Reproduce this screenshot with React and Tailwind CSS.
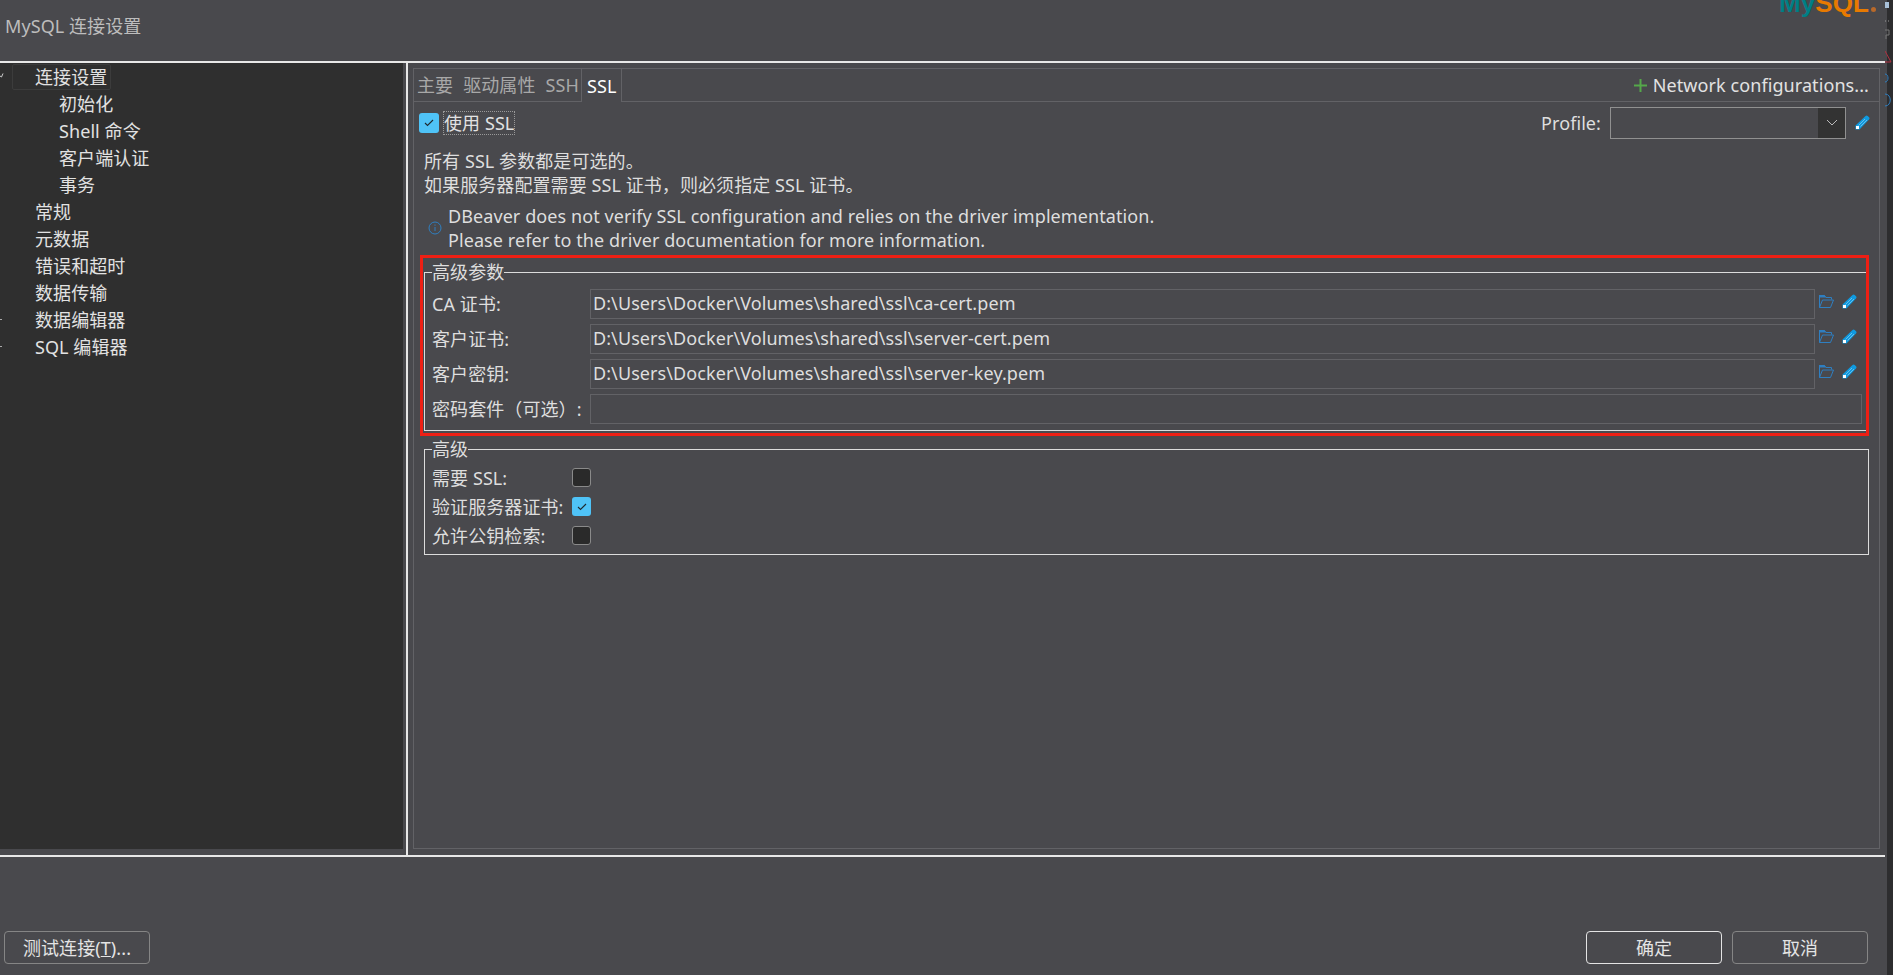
const FONT = "font-['Noto_Sans','Noto_Sans_CJK_SC',sans-serif]";

const treeItems = [
  { label: '连接设置', level: 0, active: true, marker: 'open' },
  { label: '初始化', level: 1 },
  { label: 'Shell 命令', level: 1 },
  { label: '客户端认证', level: 1 },
  { label: '事务', level: 1 },
  { label: '常规', level: 0 },
  { label: '元数据', level: 0 },
  { label: '错误和超时', level: 0 },
  { label: '数据传输', level: 0 },
  { label: '数据编辑器', level: 0, marker: 'closed' },
  { label: 'SQL 编辑器', level: 0, marker: 'closed' },
];

const PencilIcon = () => (
  <svg width="15" height="15" viewBox="0 0 15 15" className="shrink-0">
    <path d="M0.5 10.5 10.5 1a1.6 1.6 0 0 1 2.2 0l1.3 1.3a1.6 1.6 0 0 1 0 2.2L4.5 14.5H0.5z" fill="#0f9ae0" />
    <path d="M3.5 10.5 10 4M5.5 11.5 12 5" stroke="#7cc8ee" strokeWidth="0.8" />
    <rect x="1" y="11" width="3" height="3" fill="#fff" />
  </svg>
);

const FolderIcon = () => (
  <svg width="15" height="13" viewBox="0 0 15 13" className="shrink-0">
    <path d="M0.5 12.5V0.5h5l1.5 2h5.5v2" fill="none" stroke="#2f7fc1" />
    <path d="M0 0h5.5L7 2.5H0z" fill="#2f7fc1" />
    <path d="M0.5 12.5h11l3-7.5H3.5l-3 7.5z" fill="none" stroke="#2f7fc1" />
  </svg>
);

const CheckBox = ({ checked, large }) =>
  checked ? (
    <div className={`flex items-center justify-center rounded-[3px] bg-[#4fc3f7] ${large ? 'h-[20px] w-[20px]' : 'h-[19px] w-[19px]'}`}>
      <svg width="10" height="8" viewBox="0 0 10 8">
        <path d="M1 4l2.5 2.5L9 1" fill="none" stroke="#1f2a30" strokeWidth="1.1" />
      </svg>
    </div>
  ) : (
    <div className="h-[19px] w-[19px] rounded-[3px] border border-[#8a8a8a] bg-[#2a2a2a]" />
  );

const FileRow = ({ label, value }) => (
  <div className="flex h-[30px] items-center">
    <span className="w-[159px] shrink-0 pl-[1px] whitespace-nowrap">{label}</span>
    <div className="flex h-[30px] w-[1225px] items-center border border-[#626266] pl-[2px] pb-[2px]">{value}</div>
    <div className="ml-[4px] flex items-center gap-[8px] pb-[5px]">
      <FolderIcon />
      <PencilIcon />
    </div>
  </div>
);

const FlagRow = ({ label, checked }) => (
  <div className="flex h-[19px] items-center">
    <span className="w-[141px] shrink-0 pl-[1px] whitespace-nowrap">{label}</span>
    <CheckBox checked={checked} />
  </div>
);

const Button = ({ children, className }) => (
  <button className={`flex h-[33px] items-center justify-center rounded-[4px] border text-[#e4e4e4] ${className}`}>
    {children}
  </button>
);

const StripBits = () => (
  <svg width="8" height="120" viewBox="0 0 8 120" className="absolute left-0 top-0">
    <rect x="0" y="2" width="4" height="6" fill="#a8c0d8" />
    <path d="M0 21h1M3 21h1" stroke="#9a9a9a" />
    <path d="M0 30h4v5H1v4" fill="none" stroke="#777777" />
    <path d="M0 51l6 11H0" fill="none" stroke="#b03040" />
    <path d="M0 74c4 0 4 8 0 8" fill="none" stroke="#2f7fc1" />
    <path d="M0 94c7 0 7 12 0 12" fill="none" stroke="#2f7fc1" />
  </svg>
);

export default function App() {
  return (
    <div className={`flex h-[975px] w-[1893px] overflow-hidden bg-[#49494d] text-[18px] leading-[24px] tracking-[0.08px] text-[#dedede] ${FONT}`}>
      <div className="flex w-[1885px] shrink-0 flex-col">
        {/* header */}
        <div className="flex h-[61px] shrink-0 justify-between overflow-hidden">
          <div className="pl-[5px] pt-[14px] text-[#bdbdbd]">MySQL 连接设置</div>
          <div className="mr-[9px] mt-[-10px] flex h-[26px] items-start font-['Liberation_Sans',sans-serif] text-[26px] font-bold leading-[26px]">
            <span className="text-[#007f85]">My</span>
            <span className="text-[#e87a00]">SQL</span>
            <span className="ml-[2px] mt-[17px] h-[5px] w-[5px] rounded-full bg-[#b8692a]" />
          </div>
        </div>
        <div className="h-[2px] shrink-0 bg-[#e8e8e8]" />

        {/* middle */}
        <div className="flex h-[792px] shrink-0">
          <div className="flex w-[408px] shrink-0 border-r-2 border-[#e8e8e8]">
            <div className="h-[786px] w-[403px] overflow-hidden bg-[#2f2f2f]">
              {treeItems.map((item) => (
                <div key={item.label} className="relative flex h-[27px] items-center whitespace-nowrap text-[#e2e2e2]">
                  {item.marker === 'open' && (
                    <svg width="4" height="5" viewBox="0 0 4 5" className="absolute left-0 top-[10px]">
                      <path d="M0 3l1.5 1L3 0.5" fill="none" stroke="#cccccc" />
                    </svg>
                  )}
                  {item.marker === 'closed' && (
                    <svg width="3" height="5" viewBox="0 0 3 5" className="absolute left-0 top-[11px]">
                      <path d="M0 2.5h2" stroke="#aaaaaa" />
                    </svg>
                  )}
                  <span
                    className={
                      item.level === 0
                        ? `ml-[12px] rounded-[2px] border pl-[22px] pr-[3px] ${item.active ? 'border-[#3c3c3c]' : 'border-transparent'}`
                        : 'ml-[59px]'
                    }
                  >
                    {item.label}
                  </span>
                </div>
              ))}
            </div>
          </div>

          {/* tab panel */}
          <div className="ml-[5px] mt-[5px] flex h-[781px] w-[1467px] flex-col border border-[#626266]">
            <div className="flex h-[33px] shrink-0 items-center border-b border-[#626266]">
              <div className="flex h-full w-[168px] items-center gap-[10px] whitespace-nowrap border-r border-[#626266] pl-[3px] text-[#a8a8a8]">
                <span>主要</span>
                <span>驱动属性</span>
                <span>SSH</span>
              </div>
              <div className="mb-[-1px] flex h-[33px] w-[40px] items-center border-r border-[#626266] bg-[#49494d] pl-[5px] text-white">SSL</div>
              <div className="ml-auto flex items-center gap-[6px] pr-[10px] text-[#e2e2e2]">
                <svg width="13" height="13" viewBox="0 0 13 13">
                  <path d="M6.5 0v13M0 6.5h13" stroke="#55a84a" strokeWidth="2" />
                </svg>
                Network configurations...
              </div>
            </div>

            <div className="relative flex flex-1 flex-col pl-[5px]">
              <div className="flex h-[38px] items-center pr-[9px] pt-[3px]">
                <CheckBox checked large />
                <span className="ml-[4px] border border-dotted border-[#999999] leading-[22px] text-[#e2e2e2]">使用 SSL</span>
                <span className="ml-auto">Profile:</span>
                <div className="ml-[9px] flex h-[32px] w-[236px] justify-end border border-[#909090]">
                  <div className="flex w-[27px] items-center justify-center bg-[#333333]">
                    <svg width="12" height="7" viewBox="0 0 12 7">
                      <path d="M1 1l5 5 5-5" fill="none" stroke="#bbbbbb" />
                    </svg>
                  </div>
                </div>
                <div className="ml-[9px]">
                  <PencilIcon />
                </div>
              </div>

              <div className="mt-[9px] pl-[5px]">
                <div>所有 SSL 参数都是可选的。</div>
                <div>如果服务器配置需要 SSL 证书，则必须指定 SSL 证书。</div>
              </div>

              <div className="mt-[7px] flex items-center pl-[9px]">
                <svg width="14" height="14" viewBox="0 0 14 14" className="mr-[6px] shrink-0">
                  <circle cx="7" cy="7" r="6" fill="none" stroke="#2f7fc1" />
                  <path d="M7 6v4M7 3.5v1.2" stroke="#2f7fc1" />
                </svg>
                <div>
                  <div>DBeaver does not verify SSL configuration and relies on the driver implementation.</div>
                  <div>Please refer to the driver documentation for more information.</div>
                </div>
              </div>

              {/* fieldsets */}
              <fieldset className="ml-[5px] mt-[10px] h-[169px] w-[1443px] border border-[#dcdcdc] px-[6px]">
                <legend className="ml-[1px] leading-[20px]">高级参数</legend>
                <div className="mt-[7px] flex flex-col gap-[5px]">
                  <FileRow label="CA 证书:" value="D:\Users\Docker\Volumes\shared\ssl\ca-cert.pem" />
                  <FileRow label="客户证书:" value="D:\Users\Docker\Volumes\shared\ssl\server-cert.pem" />
                  <FileRow label="客户密钥:" value="D:\Users\Docker\Volumes\shared\ssl\server-key.pem" />
                  <div className="flex h-[30px] items-center">
                    <span className="w-[159px] shrink-0 pl-[1px] whitespace-nowrap">密码套件（可选）:</span>
                    <div className="h-[30px] w-[1272px] border border-[#626266]" />
                  </div>
                </div>
              </fieldset>

              <fieldset className="ml-[5px] mt-[8px] h-[116px] w-[1445px] border border-[#dcdcdc] px-[6px]">
                <legend className="ml-[1px] leading-[20px]">高级</legend>
                <div className="mt-[9px] flex flex-col gap-[10px]">
                  <FlagRow label="需要 SSL:" />
                  <FlagRow label="验证服务器证书:" checked />
                  <FlagRow label="允许公钥检索:" />
                </div>
              </fieldset>

              {/* red annotation over the screenshot */}
              <div className="absolute left-[6px] top-[153px] h-[181px] w-[1449px] border-[3px] border-[#ee1f14]" />
            </div>
          </div>
        </div>
        <div className="h-[2px] shrink-0 bg-[#e8e8e8]" />

        {/* footer */}
        <div className="flex flex-1 items-start justify-between pl-[4px] pr-[17px] pt-[74px]">
          <Button className="w-[146px] border-[#858585]">
            <span>
              测试连接(<span className="underline">T</span>)...
            </span>
          </Button>
          <div className="flex gap-[10px]">
            <Button className="w-[136px] border-[#e4e4e4]">确定</Button>
            <Button className="w-[136px] border-[#858585]">取消</Button>
          </div>
        </div>
      </div>
      <div className="relative flex-1">
        <div className="ml-[2px] h-full bg-[#2d2d2f]" />
        <StripBits />
      </div>
    </div>
  );
}
